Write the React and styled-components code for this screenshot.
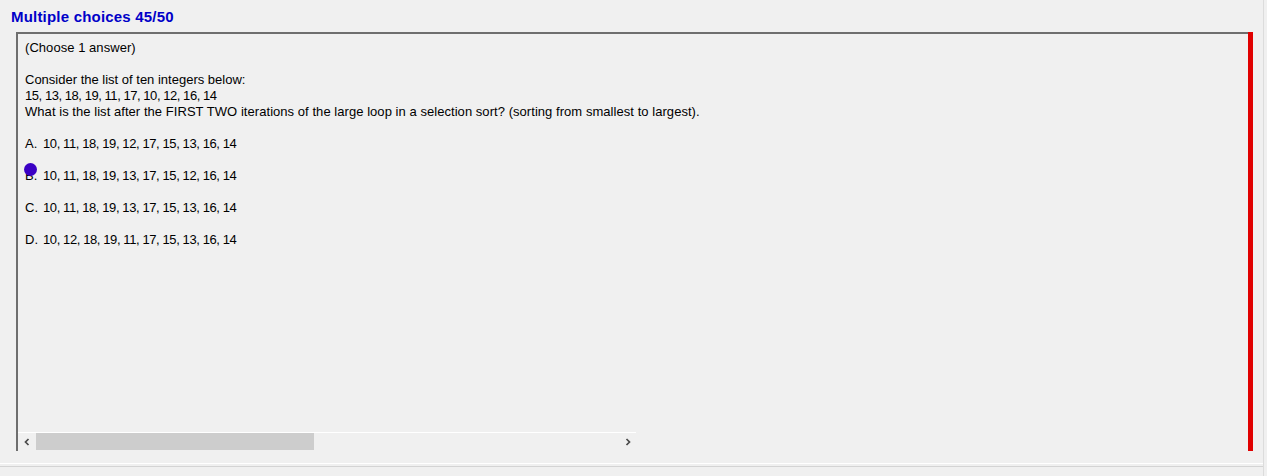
import React from 'react';
import styled, { createGlobalStyle } from 'styled-components';

const GlobalStyle = createGlobalStyle`
  html, body {
    margin: 0;
    padding: 0;
    background: #f0f0f0;
  }
  body {
    font-family: 'Liberation Sans', Arial, sans-serif;
  }
`;

const Window = styled.div`
  width: 1263px;
  height: 476px;
  border-right: 1px solid #dcdcdc;
  display: flex;
  flex-direction: column;
`;

const Title = styled.h1`
  margin: 0;
  padding: 9px 0 0 11px;
  height: 23px;
  font-size: 15px;
  line-height: 16px;
  font-weight: bold;
  color: #0000c8;
  letter-spacing: 0.2px;
`;

const PanelRow = styled.div`
  display: flex;
  margin-left: 16px;
  height: 419px;
`;

const Panel = styled.div`
  flex: 1;
  display: flex;
  flex-direction: column;
  border-top: 2px solid #6e6e6e;
  border-left: 2px solid #6e6e6e;
  position: relative;
`;

const RedBar = styled.div`
  width: 5px;
  background: #e00000;
`;

const Gap = styled.div`
  width: 10px;
`;

const Content = styled.div`
  flex: 1;
  padding: 6px 0 0 7px;
  font-size: 13px;
  line-height: 16px;
  color: #000;
`;

const Line = styled.div`
  height: 16px;
  white-space: nowrap;
  letter-spacing: ${(p) => p.$spacing || '0.05px'};
`;

const Blank = styled.div`
  height: 16px;
`;

const Option = styled.div`
  display: flex;
  height: 16px;
  white-space: nowrap;
`;

const OptionLabel = styled.span`
  width: 18px;
`;

const Numbers = styled.span`
  letter-spacing: -0.4px;
`;

const Marker = styled.div`
  position: absolute;
  left: 6px;
  top: 129px;
  width: 13px;
  height: 13px;
  border-radius: 50%;
  background: #3a00c4;
`;

const ScrollBar = styled.div`
  display: flex;
  align-items: stretch;
  width: 618px;
  height: 17px;
  margin-bottom: 1px;
  border-top: 1px solid #ffffff;
  background: #f0f0f0;
`;

const ArrowButton = styled.div`
  width: 17px;
  display: flex;
  align-items: center;
  justify-content: center;
`;

const Track = styled.div`
  flex: 1;
  display: flex;
  padding: 0 1px;
`;

const Thumb = styled.div`
  width: 278px;
  background: #cdcdcd;
`;

const Footer = styled.div`
  margin-top: 12px;
  height: 2px;
  border-top: 1px solid #ffffff;
  border-bottom: 1px solid #d4d4d4;
`;

const Chevron = ({ dir }) => (
  <svg width="8" height="8" viewBox="0 0 8 8">
    <path
      d={dir === 'left' ? 'M5.5 1 L2.5 4 L5.5 7' : 'M2.5 1 L5.5 4 L2.5 7'}
      fill="none"
      stroke="#4a4a4a"
      strokeWidth="1.7"
    />
  </svg>
);

const options = [
  ['A.', '10, 11, 18, 19, 12, 17, 15, 13, 16, 14'],
  ['B.', '10, 11, 18, 19, 13, 17, 15, 12, 16, 14'],
  ['C.', '10, 11, 18, 19, 13, 17, 15, 13, 16, 14'],
  ['D.', '10, 12, 18, 19, 11, 17, 15, 13, 16, 14'],
];

export default function App() {
  return (
    <>
      <GlobalStyle />
      <Window>
        <Title>Multiple choices 45/50</Title>
        <PanelRow>
          <Panel>
            <Content>
              <Line>(Choose 1 answer)</Line>
              <Blank />
              <Line $spacing="0px">Consider the list of ten integers below:</Line>
              <Line $spacing="-0.45px">15, 13, 18, 19, 11, 17, 10, 12, 16, 14</Line>
              <Line>
                What is the list after the FIRST TWO iterations of the large loop in a selection sort?
                (sorting from smallest to largest).
              </Line>
              {options.map(([label, text]) => (
                <React.Fragment key={label}>
                  <Blank />
                  <Option>
                    <OptionLabel>{label}</OptionLabel>
                    <Numbers>{text}</Numbers>
                  </Option>
                </React.Fragment>
              ))}
            </Content>
            <Marker />
            <ScrollBar>
              <ArrowButton>
                <Chevron dir="left" />
              </ArrowButton>
              <Track>
                <Thumb />
              </Track>
              <ArrowButton>
                <Chevron dir="right" />
              </ArrowButton>
            </ScrollBar>
          </Panel>
          <RedBar />
          <Gap />
        </PanelRow>
        <Footer />
      </Window>
    </>
  );
}
